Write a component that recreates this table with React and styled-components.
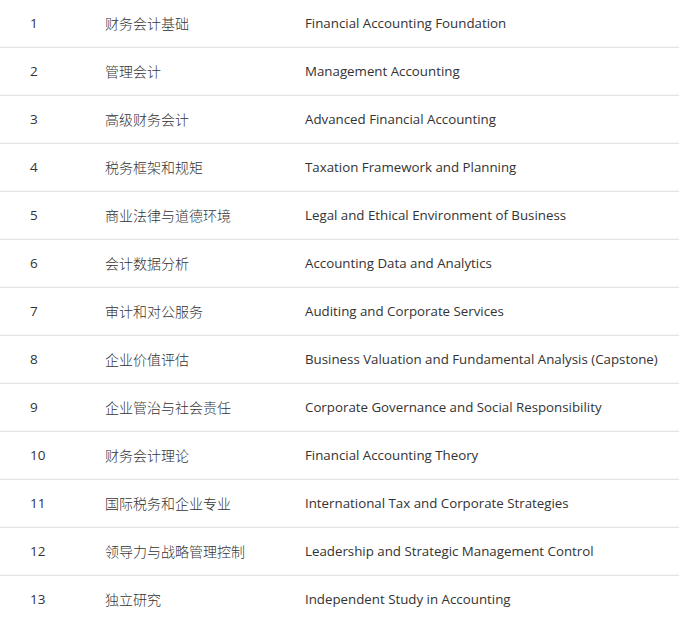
import styled, { createGlobalStyle } from "styled-components";

const GlobalStyle = createGlobalStyle`
  body {
    margin: 0;
    background: #fff;
  }
`;

const courses = [
  ["财务会计基础", "Financial Accounting Foundation"],
  ["管理会计", "Management Accounting"],
  ["高级财务会计", "Advanced Financial Accounting"],
  ["税务框架和规矩", "Taxation Framework and Planning"],
  ["商业法律与道德环境", "Legal and Ethical Environment of Business"],
  ["会计数据分析", "Accounting Data and Analytics"],
  ["审计和对公服务", "Auditing and Corporate Services"],
  ["企业价值评估", "Business Valuation and Fundamental Analysis (Capstone)"],
  ["企业管治与社会责任", "Corporate Governance and Social Responsibility"],
  ["财务会计理论", "Financial Accounting Theory"],
  ["国际税务和企业专业", "International Tax and Corporate Strategies"],
  ["领导力与战略管理控制", "Leadership and Strategic Management Control"],
  ["独立研究", "Independent Study in Accounting"],
];

const Table = styled.div`
  width: 679px;
  font-family: "Open Sans", "Noto Sans CJK SC", sans-serif;
  font-size: 13.3px;
  color: #333;
`;

const Row = styled.div`
  display: grid;
  grid-template-columns: 75px 200px 1fr;
  align-items: center;
  height: 48px;
  padding: 0 0 2px 30px;
  box-sizing: border-box;
  border-bottom: 1px solid #e6e6e6;
  box-shadow: inset 0 -5px 0 -4px #f6f6f6;
`;

const Num = styled.div`
  font-family: "Open Sans", sans-serif;
  font-size: 13.5px;
`;

const Chinese = styled.div`
  font-family: "Noto Sans CJK SC", sans-serif;
  font-size: 14px;
  font-weight: 300;
`;

const English = styled.div`
  white-space: nowrap;
`;

export default function App() {
  return (
    <>
      <GlobalStyle />
      <Table>
        {courses.map(([zh, en], i) => (
          <Row key={i}>
            <Num>{i + 1}</Num>
            <Chinese>{zh}</Chinese>
            <English>{en}</English>
          </Row>
        ))}
      </Table>
    </>
  );
}
